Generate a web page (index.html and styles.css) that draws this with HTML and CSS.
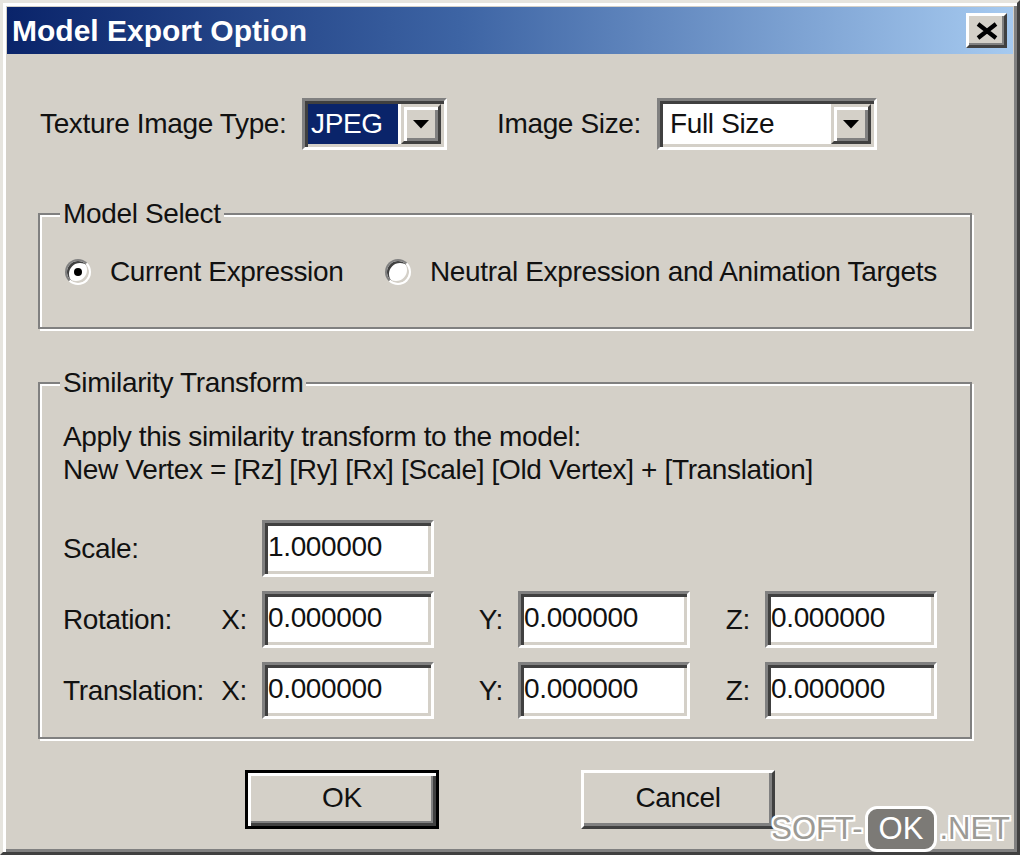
FILE: index.html
```html
<!DOCTYPE html>
<html lang="en">
<head>
  <meta charset="UTF-8" />
  <meta name="viewport" content="width=device-width, initial-scale=1.0" />
  <title>Model Export Option</title>
  <link rel="stylesheet" href="styles.css">
</head>
<body>
  <div class="window">
    <div class="titlebar">
      <span class="title">Model Export Option</span>
      <button class="close-btn" aria-label="Close">
        <svg width="24" height="18" viewBox="0 0 24 18">
          <path d="M3 2 L21 16 M21 2 L3 16" stroke="#000" stroke-width="4.2" fill="none"/>
        </svg>
      </button>
    </div>

    <div class="content">
      <div class="top-row">
        <span class="label label-type">Texture Image Type:</span>
        <div class="combo combo-type">
          <span class="combo-value selected">JPEG</span>
          <span class="combo-arrow">
            <svg width="18" height="9" viewBox="0 0 18 9"><polygon points="1,0 17,0 9,8.5" fill="#000"/></svg>
          </span>
        </div>
        <span class="label label-size">Image Size:</span>
        <div class="combo combo-size">
          <span class="combo-value">Full Size</span>
          <span class="combo-arrow">
            <svg width="18" height="9" viewBox="0 0 18 9"><polygon points="1,0 17,0 9,8.5" fill="#000"/></svg>
          </span>
        </div>
      </div>

      <div class="group group-model">
        <span class="group-title">Model Select</span>
        <div class="radios">
          <label class="radio radio-first"><span class="radio-dot checked"></span>Current Expression</label>
          <label class="radio"><span class="radio-dot"></span>Neutral Expression and Animation Targets</label>
        </div>
      </div>

      <div class="group group-transform">
        <span class="group-title">Similarity Transform</span>
        <p class="note">Apply this similarity transform to the model:<br>New Vertex = [Rz] [Ry] [Rx] [Scale] [Old Vertex] + [Translation]</p>
        <div class="transform-grid">
          <span class="row-label">Scale:</span>
          <input class="field field-scale" type="text" value="1.000000">

          <span class="row-label">Rotation:</span>
          <span class="axis">X:</span><input class="field" type="text" value="0.000000">
          <span class="axis">Y:</span><input class="field" type="text" value="0.000000">
          <span class="axis">Z:</span><input class="field" type="text" value="0.000000">

          <span class="row-label">Translation:</span>
          <span class="axis">X:</span><input class="field" type="text" value="0.000000">
          <span class="axis">Y:</span><input class="field" type="text" value="0.000000">
          <span class="axis">Z:</span><input class="field" type="text" value="0.000000">
        </div>
      </div>

      <div class="buttons">
        <button class="btn btn-default">OK</button>
        <button class="btn">Cancel</button>
      </div>
    </div>

    <div class="watermark">SOFT-<span class="wm-box">OK</span>.NET</div>
  </div>
</body>
</html>
```

FILE: styles.css
```css
* {
  box-sizing: border-box;
}
body {
  margin: 0;
  background: #d4d0c8;
  font-family: "Liberation Sans", Arial, sans-serif;
  font-size: 28px;
  letter-spacing: -0.35px;
  color: #111;
}
.window {
  position: relative;
  width: 1020px;
  height: 855px;
  padding: 4px;
  border: 3px solid;
  border-color: #e6e4de #404040 #404040 #e6e4de;
  box-shadow: inset 3px 3px 0 #fff, inset -3px -3px 0 #808080;
  background: #d4d0c8;
}
.titlebar {
  height: 47px;
  display: flex;
  align-items: center;
  justify-content: space-between;
  padding: 0 6px 0 5px;
  background: linear-gradient(to right, #0a246a, #3d64a4 45%, #a6caf0);
  color: #fff;
}
.title {
  font-weight: bold;
  font-size: 30px;
  letter-spacing: 0;
}
.close-btn {
  width: 41px;
  height: 35px;
  padding: 0;
  border: 3px solid;
  border-color: #fff #404040 #404040 #fff;
  box-shadow: inset -2px -2px 0 #808080;
  background: #d4d0c8;
  display: flex;
  align-items: center;
  justify-content: center;
}

.content {
  padding: 44px 0 0 31px;
}
.top-row {
  display: flex;
  align-items: center;
  height: 52px;
}
.label-type {
  width: 264px;
  padding-left: 2px;
}
.label-size {
  width: 160px;
  margin-left: 50px;
}
.combo {
  height: 52px;
  display: flex;
  padding: 3px;
  border: 3px solid;
  border-color: #808080 #fff #fff #808080;
  box-shadow: inset 3px 3px 0 #404040, inset -3px -3px 0 #d4d0c8;
  background: #fff;
}
.combo-type {
  width: 145px;
}
.combo-size {
  width: 220px;
}
.combo-value {
  flex: 1;
  display: flex;
  align-items: center;
  padding-left: 4px;
}
.combo-value.selected {
  background: #0a246a;
  color: #fff;
  margin-right: 3px;
  padding-left: 3px;
}
.combo-size .combo-value {
  padding-left: 7px;
}
.combo-arrow {
  width: 40px;
  display: flex;
  align-items: center;
  justify-content: center;
  border: 3px solid;
  border-color: #d4d0c8 #404040 #404040 #d4d0c8;
  box-shadow: inset 3px 3px 0 #fff, inset -3px -3px 0 #808080;
  background: #d4d0c8;
}

.group {
  position: relative;
  width: 934px;
  border: 2px solid #808080;
  box-shadow: inset 2px 2px 0 #fff, 2px 2px 0 #fff;
}
.group-title {
  position: absolute;
  top: -17px;
  left: 20px;
  padding: 0 3px;
  line-height: 32px;
  background: #d4d0c8;
}
.group-model {
  margin-top: 63px;
  padding: 41px 0 39px 25px;
}
.radios {
  display: flex;
  align-items: center;
  height: 32px;
}
.radio {
  display: inline-flex;
  align-items: center;
  gap: 19px;
}
.radio-first {
  width: 320px;
}
.radio-dot {
  position: relative;
  width: 26px;
  height: 26px;
  border-radius: 50%;
  border: 2px solid;
  border-color: #808080 #fff #fff #808080;
  box-shadow: inset 2px 2px 0 #404040, inset -2px -2px 0 #d4d0c8;
  background: #fff;
}
.radio-dot.checked::after {
  content: "";
  position: absolute;
  left: 7px;
  top: 7px;
  width: 8px;
  height: 8px;
  border-radius: 50%;
  background: #000;
}

.group-transform {
  margin-top: 53px;
  padding: 36px 0 18px 23px;
}
.note {
  margin: 0;
  line-height: 33px;
}
.transform-grid {
  margin-top: 34px;
  display: grid;
  grid-template-columns: 155px 44px 172px 84px 172px 75px 172px;
  grid-auto-rows: 57px;
  row-gap: 14px;
  align-items: center;
}
.row-label {
  grid-column: 1;
}
.field-scale {
  grid-column: 3;
}
.axis {
  text-align: right;
  padding-right: 15px;
}
.field {
  height: 57px;
  width: 100%;
  padding: 0 0 4px 3px;
  font: inherit;
  letter-spacing: inherit;
  color: #111;
  border: 3px solid;
  border-color: #808080 #fff #fff #808080;
  box-shadow: inset 3px 3px 0 #404040, inset -3px -3px 0 #d4d0c8;
  background: #fff;
  outline: none;
}

.buttons {
  display: flex;
  gap: 142px;
  margin-top: 31px;
  padding-left: 207px;
}
.btn {
  width: 194px;
  height: 59px;
  padding: 0 0 4px;
  font: inherit;
  letter-spacing: inherit;
  color: #111;
  border: 3px solid;
  border-color: #fff #404040 #404040 #fff;
  box-shadow: inset -3px -3px 0 #808080;
  background: #d4d0c8;
}
.btn-default {
  border-color: #000;
  box-shadow: inset 3px 3px 0 #fff, inset -3px -3px 0 #404040, inset -5px -5px 0 #808080;
}

.watermark {
  position: absolute;
  right: 7px;
  bottom: 0;
  display: flex;
  align-items: center;
  font-size: 31px;
  letter-spacing: 0;
  color: #9c9a95;
  text-shadow: 2px 0 0 #fff, -2px 0 0 #fff, 0 2px 0 #fff, 0 -2px 0 #fff,
    2px 2px 0 #fff, -2px -2px 0 #fff, 2px -2px 0 #fff, -2px 2px 0 #fff;
}
.wm-box {
  height: 46px;
  line-height: 40px;
  margin: 0 2px;
  padding: 0 11px;
  border: 3px solid #fff;
  border-radius: 12px;
  background: #7c7a76;
  color: #fff;
  text-shadow: none;
}
```
